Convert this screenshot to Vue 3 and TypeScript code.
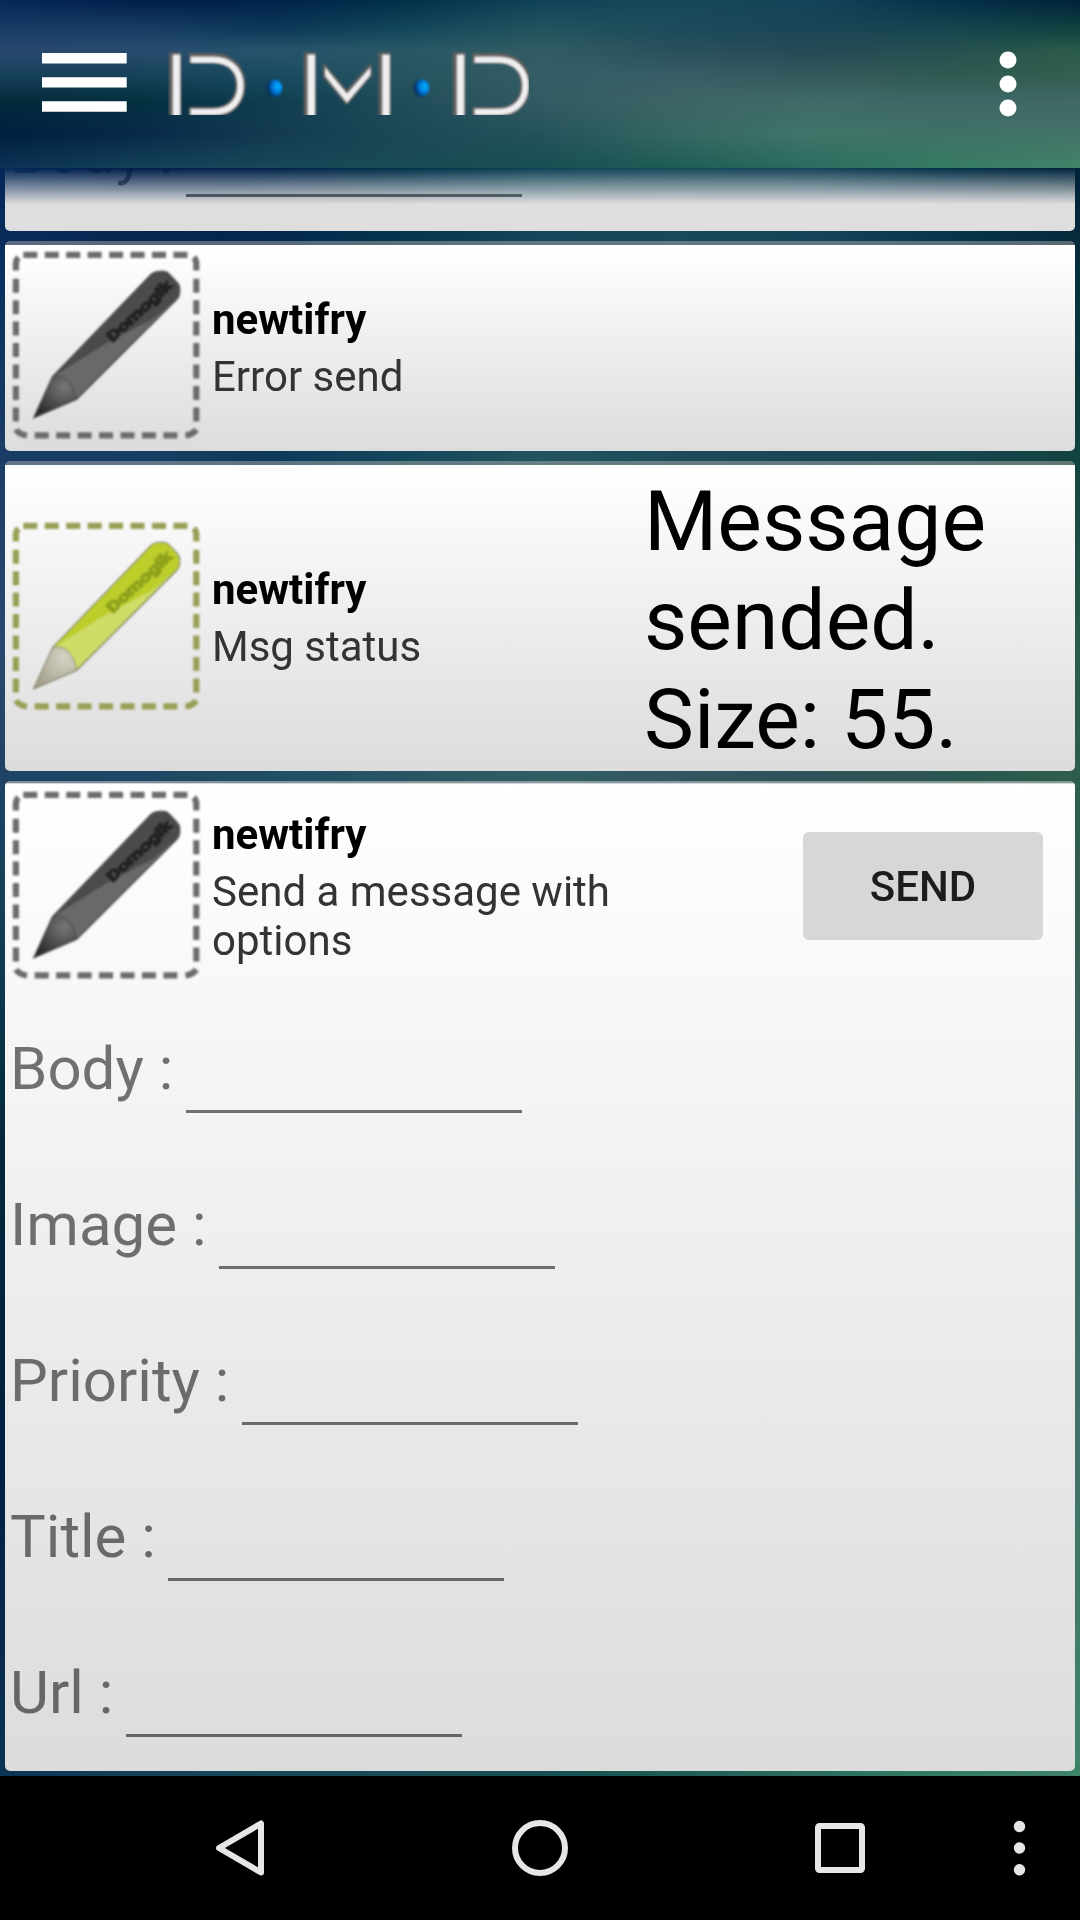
<script setup lang="ts">
interface Tone { outline: string; dark: string; light: string; coneIn: string; coneOut: string; ink: string; dash: string }
interface Card { id: string; tone: Tone; label: string; value?: string; action?: string; fields: string[]; height: number }

const grey: Tone = { outline: '#4a4a4a', dark: '#4b4b4b', light: '#696969', coneIn: '#777777', coneOut: '#2b2b2b', ink: '#242424', dash: '#6c6c6c' }
const green: Tone = { outline: '#808466', dark: '#bdce2a', light: '#cfdc67', coneIn: '#d6d2c4', coneOut: '#a5a18c', ink: '#8ea01c', dash: '#999f57' }

const cards: Card[] = [
  { id: 'error', tone: grey, label: 'Error send', fields: [], height: 210 },
  { id: 'status', tone: green, label: 'Msg status', value: 'Message sended. Size: 55.', fields: [], height: 310 },
  { id: 'message', tone: grey, label: 'Send a message with options', action: 'Send', fields: ['Body', 'Image', 'Priority', 'Title', 'Url'], height: 990 },
]

// Colour mesh of the wallpaper: each row is a horizontal ramp that fades into the next one.
const mesh: { at: number; colors: string[] }[] = [
  { at: 0, colors: ['#052858', '#011e4a', '#00224a', '#023049', '#0f4358', '#174759', '#154459', '#053049', '#00223a'] },
  { at: 17, colors: ['#193c66', '#183e64', '#0c3858', '#12475b', '#22535e', '#1d4c5c', '#1b4557', '#164650', '#10423f'] },
  { at: 30, colors: ['#29486f', '#284c70', '#28536c', '#2a5866', '#315c63', '#29505c', '#264b57', '#254f50', '#2c5c49'] },
  { at: 45, colors: ['#17405a', '#174258', '#194a60', '#275460', '#345d66', '#385e66', '#34595c', '#305b52', '#335e50'] },
  { at: 60, colors: ['#042a3b', '#04303f', '#103e50', '#214d5a', '#325b63', '#3d6465', '#406a68', '#3e6766', '#406867'] },
  { at: 80, colors: ['#002040', '#08294a', '#133b50', '#1c4957', '#25525a', '#356763', '#40756a', '#407266', '#437369'] },
  { at: 100, colors: ['#0c3254', '#144158', '#184859', '#194a55', '#174f52', '#1d5c55', '#2a6d5f', '#357b63', '#3f8469'] },
]
const layers = mesh.map((row, i) => {
  const mask = i === 0 ? 'none' : `linear-gradient(to bottom, transparent ${mesh[i - 1].at}%, #000 ${row.at}%)`
  return { background: `linear-gradient(to right, ${row.colors.join(', ')})`, maskImage: mask, WebkitMaskImage: mask }
})
</script>

<template>
  <div class="screen">
    <header class="bar">
      <div class="wall"><i v-for="(l, i) in layers" :key="i" :style="l" /></div>
      <svg class="menu" width="86" height="60" viewBox="0 0 86 60">
        <path d="M0 6.3H84.7M0 30.4H84.7M0 54.5H84.7" stroke="#fff" stroke-width="10.4" />
      </svg>
      <svg class="logo" width="361" height="64" viewBox="168 51 361 64">
        <defs>
          <filter id="soft" x="-5%" y="-10%" width="110%" height="120%"><feGaussianBlur stdDeviation="0.9" /></filter>
          <filter id="edge" x="-5%" y="-10%" width="110%" height="120%"><feGaussianBlur stdDeviation="0.8" /></filter>
          <radialGradient id="dot" cx="0.72" cy="0.42" r="0.7">
            <stop offset="0" stop-color="#06b4ff" /><stop offset="0.5" stop-color="#0578d8" /><stop offset="1" stop-color="#04254f" />
          </radialGradient>
        </defs>
        <g stroke="#625e5d" fill="none" filter="url(#soft)">
          <path d="M175 52.5V122M309.8 52.5V122M384.5 52.5V122M459 52.5V122" stroke-width="12" />
          <path d="M189 58H213C231 58 240.5 70 240.5 85S231 112 213 112H189M472.5 58H498C516 58 525.5 70 525.5 85S516 112 498 112H472.5" stroke-width="10" />
          <path d="M323 62L346.5 90L371.5 62V76L346.5 105L323 77Z" fill="#625e5d" stroke="none" />
        </g>
        <g filter="url(#edge)" fill="none" stroke="#efeff1">
          <path d="M176.5 54.5V122M311.3 54.5V122M386 54.5V122M460.5 54.5V122" stroke-width="7.6" />
          <path d="M190.5 59.7H213C231 59.700 240.5 71 240.5 85.7S231 112 213 112H190.5M474.5 59.7H498C516 59.7 525.5 71 525.5 85.7S516 112 498 112H474.5" stroke-width="6.5" />
          <path d="M325 67L347 93.5L370.5 67V75L347 103L325 76Z" fill="#efeff1" stroke="none" />
        </g>
        <ellipse cx="274.5" cy="88" rx="7.8" ry="8.8" fill="url(#dot)" filter="url(#edge)" />
        <ellipse cx="421.5" cy="88" rx="7.8" ry="8.8" fill="url(#dot)" filter="url(#edge)" />
      </svg>
      <svg class="more" width="18" height="68" viewBox="0 0 18 68" fill="#fff">
        <circle cx="9" cy="10" r="8.5" /><circle cx="9" cy="34" r="8.5" /><circle cx="9" cy="58" r="8.5" />
      </svg>
    </header>

    <main class="content">
      <div class="wall"><i v-for="(l, i) in layers" :key="i" :style="l" /></div>
      <div class="list">
        <section class="card">
          <div class="field"><span class="label">Body :</span><span class="line" /></div>
        </section>
        <section v-for="c in cards" :key="c.id" class="card" :class="c.id" :style="{ height: c.height + 'px' }">
          <div class="head">
            <svg class="pen" width="192" height="192" viewBox="0 0 192 192">
              <defs>
                <radialGradient :id="'cone-' + c.id" gradientUnits="userSpaceOnUse" cx="54" cy="138" r="34">
                  <stop offset="0" :stop-color="c.tone.coneIn" /><stop offset="1" :stop-color="c.tone.coneOut" />
                </radialGradient>
                <filter :id="'blur-' + c.id"><feGaussianBlur stdDeviation="1" /></filter>
              </defs>
              <g :filter="`url(#blur-${c.id})`">
                <g fill="none" :stroke="c.tone.dash" stroke-width="6.2">
                  <path d="M13.3 5.8H178M5.9 29.7V173M186.3 29.7V173M24.7 186.3H168" stroke-dasharray="14 7.45" />
                  <path d="M5.9 21.5V14Q6.3 10.5 8.5 8.5M186.3 21.5V14Q186 10.5 183.7 8.5M6 180.5Q9 185.5 17 186.5M186.3 180.5Q183 185.5 175.5 186.5" />
                </g>
                <path d="M24 168.5L42.7 127.7L141.5 25Q145 22.5 149 22.5H154Q157 22.5 159 25L167 33.5Q169.5 36 169.5 39V44Q169.5 47 167 50L66.7 150Z" :fill="c.tone.light" :stroke="c.tone.outline" stroke-width="1.5" />
                <path d="M43.5 127.5L142 25.5Q145 23.3 149 23.3H154Q157 23.3 159 25.5L166.5 34Q168.7 36 168.7 39V44Q168.7 47 166 50L143 70L97 94Z" :fill="c.tone.dark" />
                <path d="M24 168.5L42.7 127.7Q49 125 57 130Q65 138 66.7 150Z" :fill="`url(#cone-${c.id})`" :stroke="c.tone.outline" stroke-width="0.8" />
                <text x="0" y="0" transform="translate(102.5 94) rotate(-43)" font-size="15" font-weight="700" textLength="83" lengthAdjust="spacingAndGlyphs" :fill="c.tone.ink" :stroke="c.tone.ink" stroke-width="1.4">Domogik</text>
              </g>
            </svg>
            <div class="names">
              <strong>newtifry</strong>
              <span>{{ c.label }}</span>
            </div>
            <div v-if="c.value" class="value">{{ c.value }}</div>
            <button v-if="c.action" class="send" type="button">{{ c.action }}</button>
          </div>
          <div v-for="f in c.fields" :key="f" class="field"><span class="label">{{ f }} :</span><span class="line" /></div>
        </section>
      </div>
    </main>

    <nav class="nav">
      <svg width="1080" height="144" viewBox="0 0 1080 144" fill="none" stroke="#e6e6e6" stroke-width="6">
        <path d="M261 47.5V96.5L219 72Z" stroke-linejoin="round" />
        <circle cx="540" cy="72" r="25" />
        <rect x="818" y="50" width="44" height="44" rx="1.5" />
        <g fill="#e6e6e6" stroke="none"><circle cx="1019.5" cy="50.5" r="5.7" /><circle cx="1019.5" cy="72" r="5.7" /><circle cx="1019.5" cy="93.7" r="5.7" /></g>
      </svg>
    </nav>
  </div>
</template>

<style scoped>
.screen { width: 1080px; height: 1920px; display: flex; flex-direction: column; overflow: hidden; background: #000; font-family: Roboto, "Noto Sans", sans-serif; }
.wall { position: absolute; inset: 0; z-index: -1; }
.wall i { position: absolute; inset: 0; }
.bar { position: relative; isolation: isolate; box-sizing: border-box; height: 168px; flex: none; display: flex; align-items: flex-start; padding: 50px 63px 0 42px; }
.menu { margin-top: 2px; }
.logo { margin: 1px 0 0 40px; }
.more { margin-left: auto; }
.content { position: relative; isolation: isolate; height: 1608px; flex: none; }
.list { box-sizing: border-box; height: 100%; padding: 0 5px 5px; display: flex; flex-direction: column; justify-content: flex-end; gap: 10px; overflow: hidden; mask-image: linear-gradient(to bottom, transparent, #000 36px); -webkit-mask-image: linear-gradient(to bottom, transparent, #000 36px); }
.card { box-sizing: border-box; flex: none; display: flex; flex-direction: column; border-radius: 5px; background: linear-gradient(to bottom, #fff, #dcdcdc); overflow: hidden; }
.card:first-child { background: #dedede; }
.error, .status { background: linear-gradient(to bottom, rgba(170, 170, 170, .5) 4px, #fff 4.5px, #fff 7px, #dcdcdc); }
.message { background: linear-gradient(to bottom, rgba(190, 190, 190, .6) 1.5px, #fff 3px, #dcdcdc); }
.head { box-sizing: border-box; display: flex; align-items: center; padding-left: 5px; }
.error .head { padding-top: 8px; }
.status .head { height: 309px; }
.message .head { height: 210px; padding: 8px 0 10px 5px; }
.pen { flex: none; }
.names { width: 432px; margin: 5px 0 0 10px; display: flex; flex-direction: column; gap: 8px; font-size: 42px; line-height: 49px; color: #333; }
.names strong { color: #000; font-weight: 700; }
.value { width: 400px; margin-top: 10px; font-size: 84px; line-height: 99px; color: #000; }
.send { width: 240px; height: 108px; margin: 2px 0 0 159px; padding: 2px 0 0; border: 0; border-radius: 6px; background: #d6d8d8; color: #1c1c1c; font: 500 42px/106px Roboto, sans-serif; text-transform: uppercase; }
.field { box-sizing: border-box; height: 156px; padding: 43px 0 34px 5px; display: flex; gap: 12.6px; flex: none; }
.label { font-size: 60px; line-height: 70px; color: rgba(0, 0, 0, .54); white-space: pre; }
.line { width: 336px; height: 3px; align-self: flex-end; background: rgba(0, 0, 0, .54); }
.nav { height: 144px; flex: none; background: #000; }
.nav svg { display: block; }
</style>
